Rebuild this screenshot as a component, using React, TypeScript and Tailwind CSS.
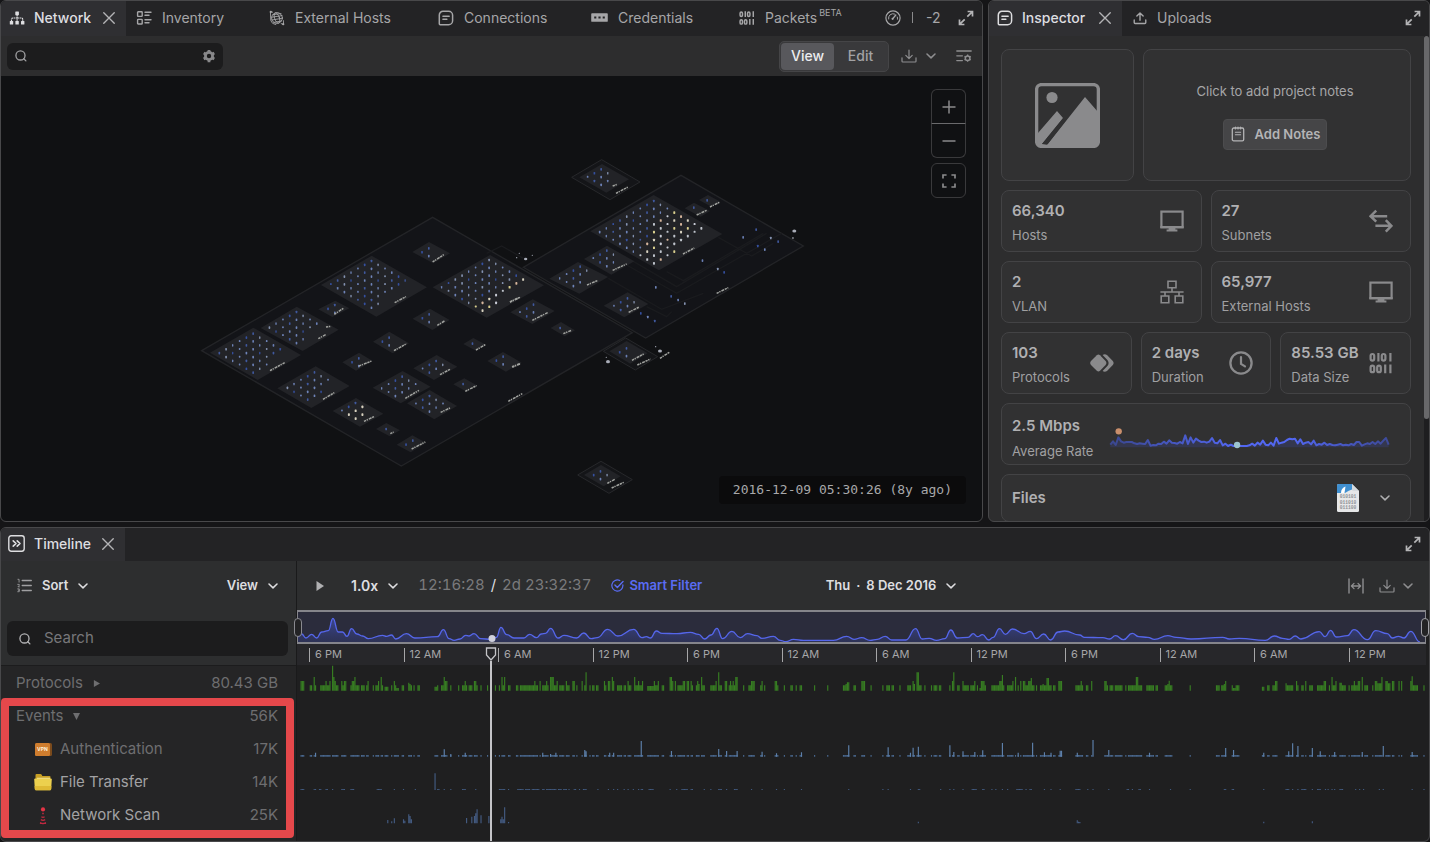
import React from "react";

type Pt = [number, number];
type IconProps = { className?: string };

/* ---------- icons ---------- */

const line = {
  fill: "none",
  stroke: "currentColor",
  strokeWidth: 1.4,
  strokeLinecap: "round" as const,
  strokeLinejoin: "round" as const,
};

function Icon({ className = "size-4", box = 16, children }: { className?: string; box?: number; children: React.ReactNode }) {
  return (
    <svg viewBox={`0 0 ${box} ${box}`} className={`shrink-0 ${className}`} aria-hidden="true">
      {children}
    </svg>
  );
}

const NetworkIcon = ({ className }: IconProps) => (
  <Icon className={className}>
    <g fill="currentColor">
      <rect x="6.3" y="1.6" width="3.6" height="3.6" rx=".5" />
      <rect x=".8" y="11" width="3.4" height="3.4" rx=".5" />
      <rect x="6.4" y="11" width="3.4" height="3.4" rx=".5" />
      <rect x="12" y="11" width="3.4" height="3.4" rx=".5" />
    </g>
    <path d="M8.1 5v6M2.5 11V9.4q0-1.4 1.4-1.4h8.4q1.4 0 1.4 1.4V11" {...line} strokeWidth="1.2" strokeDasharray="1.6 .5" strokeLinecap="butt" />
  </Icon>
);
const InventoryIcon = () => (
  <Icon>
    <rect x="1.6" y="1.8" width="4.6" height="4.6" rx=".6" {...line} />
    <rect x="1.6" y="9.4" width="4.6" height="4.6" rx=".6" {...line} />
    <path d="M9 2.2h6M9 5.2h4M9 9.8h6M9 12.8h4" {...line} />
  </Icon>
);
const GlobeIcon = () => (
  <Icon>
    <g {...line} strokeWidth=".9">
      <circle cx="8" cy="8" r="5.4" />
      <ellipse cx="8" cy="8" rx="2.4" ry="5.4" transform="rotate(-20 8 8)" />
      <path d="M2.8 7.2 13 5.6M3 10l10.4-1.8M4 4.6l8-1M4.8 12.4l7.6-1.4" />
      <path d="M1.4 1.6l2.2.6M1.4 1.6l.4 9q1 3.6 5 4M14.6 14.6l-2.4-1M14.6 14.6l-.2-4" />
    </g>
    <circle cx="1.8" cy="1.9" r="1.1" fill="currentColor" />
    <circle cx="14.2" cy="14.2" r="1.1" fill="currentColor" />
  </Icon>
);
const NoteIcon = () => (
  <Icon>
    <path d="M5 1.3h5.6a4 4 0 0 1 4 4v5.4a4 4 0 0 1-4 4H2.2a.9.9 0 0 1-.9-.9V5A3.7 3.7 0 0 1 5 1.3Z" {...line} strokeWidth="1.5" />
    <path d="M4.9 6.3h6.3M4.9 9.3h4" {...line} />
  </Icon>
);
const PasswordIcon = () => (
  <Icon className="size-[17px]">
    <path fill="currentColor" fillRule="evenodd" d="M1 4h14q.8 0 .8.8v6.4q0 .8-.8.8H1q-.8 0-.8-.8V4.8Q.2 4 1 4Zm2 3v2h2V7Zm4 0v2h2V7Zm4 0v2h2V7Z" />
  </Icon>
);
const BitsIcon = ({ className }: IconProps) => (
  <Icon className={className} box={24}>
    <g fill="none" stroke="currentColor" strokeWidth="2.2">
      <rect x="1.6" y="3" width="3.6" height="6.6" rx="1.8" />
      <rect x="12.8" y="3" width="3.6" height="6.6" rx="1.8" />
      <path d="M9.4 2v8.6M21.4 2v8.6M16.2 13.6v8.6M21.4 13.6v8.6" />
      <rect x="1.6" y="14.6" width="3.6" height="6.6" rx="1.8" />
      <rect x="8.2" y="14.6" width="3.6" height="6.6" rx="1.8" />
    </g>
  </Icon>
);
const GaugeIcon = () => (
  <Icon>
    <circle cx="8" cy="8" r="7.1" {...line} strokeWidth="1.2" />
    <path d="M3.6 9a4.5 4.5 0 0 1 6-5M12.3 7q.4 1 .2 2.2" {...line} strokeWidth="1" />
    <path d="M7.8 8.6 10.8 5" {...line} strokeWidth="1.4" />
    <circle cx="7.6" cy="8.8" r="1.1" fill="currentColor" />
  </Icon>
);
const ExpandIcon = () => (
  <Icon>
    <path d="M9.6 1.5h4.9v4.9M14.2 1.8 9.3 6.7M6.4 14.5H1.5V9.6M1.8 14.2l4.9-4.9" {...line} strokeLinecap="butt" strokeLinejoin="miter" strokeWidth="1.7" />
  </Icon>
);
const CloseIcon = () => (
  <Icon className="size-[14px]">
    <path d="M2 2l12 12M14 2 2 14" {...line} strokeWidth="1.6" />
  </Icon>
);
const SearchIcon = () => (
  <Icon className="size-[14px]">
    <circle cx="7.4" cy="7.4" r="5.2" {...line} strokeWidth="1.5" />
    <path d="m11.2 11.2 2.4 2.4" {...line} strokeWidth="1.5" />
  </Icon>
);
const GearIcon = () => (
  <Icon className="size-[14px]">
    <circle cx="8" cy="8" r="4.1" fill="none" stroke="currentColor" strokeWidth="3.2" />
    <g stroke="currentColor" strokeWidth="3.2">
      <path d="M8 1v3M8 12v3M1.94 4.5l2.6 1.5M11.46 10l2.6 1.5M1.94 11.5l2.6-1.5M11.46 6l2.6-1.5" />
    </g>
  </Icon>
);
const DownloadIcon = () => (
  <Icon>
    <path d="M8 2v8.4M4.8 7.4 8 10.6l3.2-3.2M1 9.8v3.4q0 .8.8.8h12.4q.8 0 .8-.8V9.8" {...line} strokeWidth="1.2" />
  </Icon>
);
const UploadIcon = () => (
  <Icon className="size-[14px]">
    <path d="M8 10.6V2.4M4.4 5.8 8 2.2l3.6 3.6M1.4 10.2v3q0 1 1 1h11.2q1 0 1-1v-3" {...line} strokeWidth="1.6" />
  </Icon>
);
const ChevronIcon = () => (
  <Icon className="size-[10px]" box={10}>
    <path d="M1 3 5 6.9 9 3" {...line} strokeWidth="1.5" />
  </Icon>
);
const ListGearIcon = () => (
  <Icon>
    <path d="M.8 3h14.4M.8 7.8h5.6M.8 12.6h5.6" {...line} strokeWidth="1.3" />
    <circle cx="11.6" cy="10.2" r="2.3" {...line} strokeWidth="1.5" />
    <path d="M11.6 6.6v7.2M8.5 8.4l1 .6M13.7 11.4l1 .6M8.5 12l1-.6M13.7 9l1-.6" stroke="currentColor" strokeWidth="1.3" strokeDasharray="1.3 4.6" />
  </Icon>
);
const CornersIcon = () => (
  <Icon>
    <path d="M2 5.6V2h3.600M10.400 2H14v3.600M14 10.400V14h-3.600M5.600 14H2v-3.600" fill="none" stroke="currentColor" strokeWidth="1.7" />
  </Icon>
);
const ImageIcon = () => (
  <Icon className="size-[65px]" box={65}>
    <rect x="1.6" y="1.6" width="61.8" height="61.8" rx="5" fill="none" stroke="currentColor" strokeWidth="3.4" />
    <circle cx="17" cy="14.5" r="5.6" fill="currentColor" />
    <path d="M3 50 22 28l6 7L7 61l5 1 38-48 13 15v30q0 4-4 4H6q-4 0-4-4Z" fill="currentColor" />
    <path d="M7 61 28 35.5l2.4 2.6L12.6 61Z" className="fill-[#313132]" />
  </Icon>
);
const NotepadIcon = () => (
  <Icon>
    <rect x="2.3" y="2" width="11.4" height="12.8" rx="1.4" {...line} strokeWidth="1.3" />
    <path d="M5.4 6.2h5.2M5.4 8.8h5.2M5.4 1v2M8 1v2M10.6 1v2" {...line} strokeWidth="1.1" />
  </Icon>
);
const MonitorIcon = () => (
  <Icon className="size-6" box={24}>
    <rect x="1.4" y="2.6" width="21.2" height="15.6" fill="none" stroke="currentColor" strokeWidth="2.2" />
    <path d="M.4 17h23.200v2.300H.4zM8.600 19h6.800v1.600h2v1.800H6.600v-1.800h2z" fill="currentColor" />
  </Icon>
);
const SwapIcon = () => (
  <Icon className="size-6" box={24}>
    <path d="M7.200 1.600 1.600 7.200l5.600 5.400M2 7.200h16.200M16.800 11.200l5.600 5.600-5.600 5.800M22 16.800H6.400" fill="none" stroke="currentColor" strokeWidth="2.500" />
  </Icon>
);
const VlanIcon = () => (
  <Icon className="size-6" box={24}>
    <g fill="none" stroke="currentColor" strokeWidth="1.6">
      <path d="M8 1.2h8v6.6H8zM1.2 16h7.6v6.8H1.2zM15.2 16h7.6v6.8h-7.6zM.4 12h23.2M12 8v4M5 12v4M19 12v4" />
    </g>
  </Icon>
);
const ProtocolIcon = () => (
  <Icon className="size-6" box={24}>
    <path d="M6.800 4.200q1.600-1.200 3.200 0l5.600 5.800q1.600 2 0 4L10 19.800q-1.600 1.200-3.200 0L1 14q-1.600-2 0-4Z" fill="currentColor" />
    <path d="M12.600 4q2-1.400 4.400 0l5.800 6q1.600 2 0 4L17 20q-2.400 1.400-4.400 0l5-5.200q2-2.800 0-5.600Z" fill="currentColor" />
  </Icon>
);
const ClockIcon = () => (
  <Icon className="size-6" box={24}>
    <circle cx="12" cy="12" r="10.600" fill="none" stroke="currentColor" strokeWidth="2.300" />
    <path d="M12 6v6.800l4 2.600" fill="none" stroke="currentColor" strokeWidth="2.200" strokeLinecap="round" />
  </Icon>
);
const TimelineIcon = () => (
  <Icon className="size-[17px]" box={17}>
    <rect x=".8" y=".8" width="15.4" height="15.4" rx="2.4" {...line} />
    <path d="M5.2 5.8l2.8 2.7-2.8 2.7M9.2 5.8l2.8 2.7-2.8 2.7" {...line} strokeWidth="1.6" />
  </Icon>
);
const SortIcon = () => (
  <Icon className="size-[15px]">
    <path d="M5.6 2.6h9.6M5.6 8h9.6M5.6 13.4h9.6" {...line} strokeWidth="1.5" />
    <path d="M1 1.4h1.2v3M.8 6.8h1.6v1L1 9.4h1.6M.8 11.6h1.6v3H.8M1.4 13h1" {...line} strokeWidth=".9" />
  </Icon>
);
const CheckBadgeIcon = () => (
  <Icon className="size-[13px]">
    <path d="M14.6 7.2A6.8 6.8 0 1 1 10.8 1.9" {...line} strokeWidth="1.5" />
    <path d="m4.8 7.4 3 3 7-7.2" {...line} strokeWidth="1.7" />
  </Icon>
);
const FitIcon = () => (
  <Icon>
    <path d="M1 1v14M15 1v14" {...line} strokeWidth="1.4" />
    <path d="M3.6 8h8.8M6 5.4 3.4 8 6 10.6M10 5.4 12.6 8 10 10.6" {...line} strokeWidth="1.3" />
  </Icon>
);
const FileIcon = () => (
  <svg viewBox="0 0 24 28" className="h-7 w-6 shrink-0" aria-hidden="true">
    <path d="M2.5 0H16l7 7v19.500q0 1.500-1.500 1.500h-19Q1 28 1 26.500v-25Q1 0 2.500 0Z" fill="#e6e7e8" />
    <path d="M2.500 0H16v5.500q-3 .5-7 3.500H1V1.500Q1 0 2.500 0Z" fill="#3f8fd0" />
    <path d="M5 9q0-5 4.500-6.500L8.500 9Z" fill="#fff" />
    <path d="M16 0l7 7h-5.500Q16 7 16 5.500Z" fill="#d5dade" />
    <g fill="#8d9296" fontSize="4.600" fontFamily="Liberation Mono, monospace" textAnchor="middle">
      <text x="12" y="14.400">010101</text>
      <text x="12" y="19.800">011010</text>
      <text x="12" y="25.200">011100</text>
    </g>
  </svg>
);
const VpnIcon = () => (
  <svg viewBox="0 0 17 13" className="h-[13px] w-[17px] shrink-0" aria-hidden="true">
    <rect width="17" height="13" rx="1.500" fill="#7a4a1c" />
    <rect width="15" height="13" rx="1.500" fill="#cf7d2e" />
    <text x="7.500" y="8.200" fontSize="5" fontWeight="700" fill="#fff0dc" textAnchor="middle" fontFamily="Inter, sans-serif">VPN</text>
  </svg>
);
const FolderIcon = () => (
  <svg viewBox="0 0 18 17" className="h-[17px] w-[18px] shrink-0" aria-hidden="true">
    <path d="M1.500 1q0-1 1-1h4q.8 0 1.200.8L8.300 2h7.200q1 0 1 1v4h-15Z" fill="#c79f24" />
    <path d="M3 3.700h13V7H3Z" fill="#f0e4a8" />
    <path d="M.2 5.600q0-1 1-1h15.600q1 0 1 1l-.6 9.400q-.1 1.200-1.200 1.200H2Q.9 16.200.8 15Z" fill="#ecd04e" />
    <path d="M.6 12h16.800l-.2 3q-.1 1.200-1.200 1.200H2Q.9 16.200.8 15Z" fill="#dfba35" />
  </svg>
);
const ScanIcon = () => (
  <svg viewBox="0 0 18 18" className="size-[18px] shrink-0" aria-hidden="true">
    <circle cx="9" cy="2.400" r="2.100" fill="#e33446" />
    <g fill="none" stroke="#c12a40" strokeWidth="1.300">
      <path d="M8.200 6.500h1.600M7.400 9.800q1.600 1 3.200 0M6.800 12.600q2.200 1.400 4.400 0M6 15.600q3 1.900 6 0" />
    </g>
    <path d="M6 16.400h6" stroke="#c12a40" strokeWidth="1" />
  </svg>
);

/* ---------- network map ---------- */

const DX = 20.3;
const DY = 11.7;

// left, top and right corner, first host, hosts per row, rows, hosts in the last row, colour mix
type Tile = { c: number[]; h: number[]; warm?: number; outer?: number[] };

const WEST: Tile[] = [
  { c: [60, 458, 190, 383, 333, 465], h: [190, 401, 6, 6, 3] },
  { c: [212, 384, 320, 320, 446, 389], h: [320, 336, 5, 5, 2] },
  { c: [385, 328, 436, 302, 478, 325], h: [435, 315, 2, 2, 1] },
  { c: [393, 255, 545, 167, 711, 262], h: [545, 183, 7, 7, 2] },
  { c: [667, 156, 717, 126, 780, 160], h: [717, 145, 2, 2, 1] },
  { c: [728, 262, 900, 165, 1062, 256], h: [898, 180, 8, 7, 3], warm: 2 },
  { c: [668, 356, 720, 326, 779, 360], h: [718, 343, 2, 2, 1] },
  { c: [549, 425, 598, 395, 657, 430], h: [598, 413, 2, 2, 1] },
  { c: [457, 487, 507, 458, 548, 483], h: [507, 475, 2, 2, 1] },
  { c: [262, 565, 377, 499, 479, 558], h: [374, 517, 5, 4, 3] },
  { c: [428, 633, 498, 594, 580, 641], h: [497, 609, 3, 3, 2], warm: 4 },
  { c: [548, 563, 638, 513, 722, 560], h: [637, 530, 4, 3, 4] },
  { c: [670, 505, 740, 465, 802, 500], h: [739, 483, 3, 2, 3] },
  { c: [651, 610, 719, 570, 801, 618], h: [719, 588, 3, 3, 3] },
  { c: [790, 553, 823, 535, 860, 556], h: [820, 552, 1, 1, 1] },
  { c: [820, 432, 850, 414, 888, 434], h: [848, 431, 1, 1, 1] },
  { c: [892, 483, 939, 456, 995, 488], h: [940, 470, 2, 2, 1] },
  { c: [558, 687, 589, 669, 630, 691], h: [589, 687, 1, 1, 1] },
  { c: [620, 734, 667, 706, 709, 729], h: [669, 722, 2, 1, 2] },
];
const EAST: Tile[] = [
  { c: [331, 244, 521, 135, 727, 252], h: [522, 153, 9, 9, 4], warm: 1 },
  { c: [312, 327, 381, 287, 463, 334], h: [381, 302, 3, 3, 2] },
  { c: [208, 386, 294, 336, 384, 381], h: [301, 350, 4, 3, 2] },
  { c: [371, 467, 443, 427, 505, 462], h: [443, 445, 3, 2, 3] },
  { c: [657, 150, 684, 135, 721, 155], h: [682, 151, 1, 1, 1] },
  { c: [614, 175, 642, 158, 690, 183], h: [642, 173, 1, 1, 1] },
  { c: [91, 487, 158, 448, 224, 483], h: [161, 464, 3, 2, 2] },
  { c: [212, 534, 243, 516, 285, 541], h: [241, 534, 1, 1, 1] },
  { c: [388, 604, 440, 573, 503, 610], h: [440, 595, 2, 2, 1], outer: [370, 604, 437, 564, 533, 620] },
  { c: [312, 975, 363, 945, 422, 979], h: [362, 964, 2, 2, 2], outer: [293, 975, 363, 934, 457, 989] },
  { c: [298, 82, 366, 42, 447, 88], h: [364, 58, 3, 3, 2], outer: [275, 82, 365, 29, 480, 96] },
];
const WEST_LABELS = [
  [240, 512, 284, 488], [385, 416, 407, 404], [433, 343, 460, 325], [614, 308, 648, 290], [728, 186, 763, 163],
  [960, 306, 986, 293], [742, 376, 765, 362], [612, 452, 650, 431], [507, 498, 545, 483], [399, 598, 433, 578],
  [522, 664, 552, 650], [646, 595, 687, 571], [750, 524, 780, 508], [752, 637, 780, 624], [826, 574, 860, 557],
  [858, 450, 886, 434], [966, 500, 990, 491], [601, 701, 611, 696], [665, 747, 706, 726], [955, 604, 997, 581],
  [408, 381, 424, 379],
];
const EAST_LABELS = [
  [609, 312, 643, 294], [398, 361, 440, 342], [321, 405, 352, 392], [446, 487, 478, 471], [690, 171, 718, 157],
  [650, 195, 680, 181], [157, 511, 203, 488], [250, 551, 275, 541], [90, 456, 120, 442], [710, 430, 745, 413],
  [456, 631, 491, 612], [472, 645, 512, 627], [540, 625, 568, 607], [97, 652, 122, 641], [382, 1000, 405, 988],
  [395, 1014, 434, 996], [398, 108, 412, 103], [408, 130, 446, 110],
];
const LOOSE_HOSTS: Pt[] = [
  [829, 239], [790, 262], [873, 264], [834, 288], [855, 299], [895, 275], [668, 332], [714, 357],
  [733, 367], [528, 412], [574, 439], [595, 450], [615, 461], [483, 490], [504, 501], [525, 513],
];
const GATEWAYS = [
  [137, 327, 5], [118, 310, 2], [110, 323, 2], [157, 316, 2], [384, 635, 6], [379, 622, 2],
  [540, 603, 6], [527, 590, 2], [943, 243, 6], [939, 264, 3],
];

const rhombus = ([lx, ly, tx, ty, rx, ry]: number[]) => `M${lx} ${ly}L${tx} ${ty}L${rx} ${ry}L${lx + rx - tx} ${ly + ry - ty}Z`;
const COOL = ["#40599f", "#6a7fb4", "#8492b0", "#3550a0", "#6f84b8"];
const WARM = ["#d8d2c0", "#d9cf8e", "#c9ccd6", "#d6b59c", "#bfc4cc"];

function hostColor(i: number, j: number, warm?: number) {
  const k = (i * 7 + j * 3 + i * j) % 5;
  if (warm === 1 && (i >= 3 && (i > j / 1.6 + 1 || i > 5))) return WARM[k];
  if (warm === 2 && i >= 5) return WARM[k];
  if (warm === 2) return COOL[k === 0 ? 2 : k];
  if (warm === 4 && i >= 1) return WARM[0];
  return COOL[k];
}

function TileShape({ tile }: { tile: Tile }) {
  const [x, y, perRow, rows, last] = tile.h;
  const hosts: React.ReactNode[] = [];
  for (let i = 0; i < rows; i++) {
    for (let j = i === rows - 1 ? perRow - last : 0; j < perRow; j++) {
      const k = (i * 5 + j * 3) % 4;
      const color = hostColor(i, j, tile.warm);
      hosts.push(
        <rect
          key={`${i}-${j}`}
          x={x + (i - j) * DX - 3}
          y={y + (i + j) * DY - 4}
          width={WARM.includes(color) ? 6 : k === 1 ? 4 : 5}
          height={k === 2 ? 6 : 8}
          rx="2"
          fill={color}
        />
      );
    }
  }
  return (
    <g>
      {tile.outer && <path d={rhombus(tile.outer)} fill="#141518" stroke="#27282b" strokeWidth="3" />}
      <path d={rhombus(tile.c)} fill="#222327" />
      {hosts}
    </g>
  );
}

function Labels({ items }: { items: number[][] }) {
  return (
    <g stroke="#a2a4a0" strokeWidth="4.5" strokeDasharray="7 2 4 3 9 2">
      {items.map(([a, b, c, d], n) => (
        <path key={n} d={`M${a} ${b}L${c} ${d}`} />
      ))}
    </g>
  );
}

function NetworkMap() {
  return (
    <svg viewBox="1 76 981 445" className="size-full" role="img" aria-label="Network map">
      <g transform="translate(190 200) scale(.3333)">
        <path d={rhombus([35, 452, 728, 52, 1327, 398])} fill="#131418" stroke="#232427" strokeWidth="4" />
      </g>
      <g transform="translate(480 150) scale(.3333)">
        <path d={rhombus([130, 352, 603, 76, 970, 288])} fill="#131418" stroke="#232427" strokeWidth="4" />
        <g fill="none" stroke="#1a1b1e" strokeWidth="4">
          <path d="M715 262 815 318 880 280M460 334 590 410 860 250M440 345 590 430 905 250M385 385 545 478 670 430M500 470 560 500 575 485M560 365 610 392 850 250M20 310 65 288 130 325" />
        </g>
      </g>
      <g transform="translate(190 200) scale(.3333)">
        {WEST.map((t, n) => (
          <TileShape key={n} tile={t} />
        ))}
        <Labels items={WEST_LABELS} />
      </g>
      <g transform="translate(480 150) scale(.3333)">
        {EAST.map((t, n) => (
          <TileShape key={n} tile={t} />
        ))}
        {LOOSE_HOSTS.map(([x, y], n) => (
          <rect key={n} x={x - 3} y={y - 4} width="5" height="8" rx="2" fill={COOL[n % 5]} />
        ))}
        {GATEWAYS.map(([x, y, r], n) => (
          <ellipse key={n} cx={x} cy={y} rx={r} ry={r * 0.8} fill="#a9adb8" />
        ))}
        <Labels items={EAST_LABELS} />
      </g>
    </svg>
  );
}

/* ---------- timeline data ---------- */

// "start-end:height" runs, each section with its own offset
const TRAFFIC: [number, string][] = [
  [0, "30-44:29 60-68:16 70-74:41 76-80:16 90-106:16 106-110:29 112-118:16 118-122:29 126-130:75 130-134:41 134-138:29 138-146:16 153-158:29 158-162:16 162-168:29 181-186:16 186-193:29 193-198:41 198-210:16 214-224:16 228-232:16 232-236:29 247-252:16 258-264:16 265-269:29 271-275:41 275-279:16 283-296:12 302-306:16 310-315:29 316-321:16 321-326:8 335-341:16 354-358:24 358-363:20 363-367:16 370-375:16 382-390:16 433-442:12 442-447:16 455-460:16 461-465:41 466-471:29 479-485:16 504-509:16 518-524:16 524-528:29 528-533:16 536-548:16 550-558:29 558-562:16 570-575:16 590-595:16 614-619:16 626-631:16 633-637:41 637-640:16 641-645:41 653-662:16 676-686:16 690-705:16 707-732:16 732-736:29 736-745:16 748-753:29 756-768:16 768-772:29 772-776:16 780-784:41 786-790:41 792-800:16 800-804:29 808-822:16 826-831:29 831-839:16 849-854:29 858-862:16 873-879:29 881-885:16 886-890:55 897-901:16 908-913:16 918-925:16 940-945:29 947-951:16 952-962:29 964-968:41 968-972:29 980-996:16 1000-1010:16 1012-1018:29 1018-1023:16 1031-1035:41 1035-1043:16 1043-1047:29 1050-1055:16 1055-1059:29 1072-1090:14 1090-1094:29 1097-1103:16 1103-1107:29 1115-1122:16 1140-1145:41 1147-1151:29 1156-1160:29 1162-1178:16 1180-1185:29 1188-1196:29"],
  [1200, "0-4:29 4-10:16 18-22:16 22-26:29 26-30:20 32-36:41 38-45:16 60-75:16 75-79:29 83-87:55 88-95:16 105-112:29 114-118:16 118-122:29 122-126:16 129-133:29 133-137:16 137-143:41 158-163:16 176-181:16 181-193:29 210-213:16 213-217:29 221-227:16 255-261:29 260-264:16 280-285:16 302-308:16 315-320:16 330-336:16 371-375:16 411-415:16 460-465:16 468-472:20 472-477:25 492-497:16 512-524:29 540-545:16 576-581:16 588-599:16 606-611:16 627-632:16 650-655:16 657-664:16 666-671:29 672-677:20 681-686:55 687-694:16 702-706:16 722-728:16 730-734:16 736-741:16 748-754:16 776-781:16 787-791:29 791-795:55 803-809:16 816-822:29 822-829:16 831-836:16 839-851:16 851-854:29 854-858:16 860-866:16 870-874:8 874-884:29 884-888:16 904-928:16 928-934:29 937-941:47 941-945:16 950-966:16 966-972:29 974-980:41 982-988:16 990-996:29 1000-1006:29 1008-1016:16 1016-1022:29 1024-1028:38 1028-1034:16 1036-1041:16 1050-1056:16 1057-1063:20 1063-1070:16 1071-1076:38 1079-1085:16 1090-1097:16 1103-1106:16 1106-1115:29"],
  [2310, "48-60:16 60-64:29 64-69:16 79-87:16 95-99:29 134-139:29 139-146:16 148-152:16 154-159:16 166-188:16 197-201:16 204-228:16 228-234:41 234-237:16 240-246:16 260-283:16 286-296:16 315-323:16 323-327:20 327-331:30 331-336:16 387-390:16 468-478:16 485-492:16 492-495:20 496-500:29 516-520:16 520-525:8 528-537:16 605-614:12 620-628:16 638-645:16 645-653:29 677-681:22 681-687:16 690-700:16 707-713:29 713-716:16 724-731:16 737-741:29 748-758:16 771-790:16 791-799:29 805-810:16 815-820:41 820-826:16 826-831:29 838-846:24 846-856:16 866-870:16 872-880:16 880-884:29 884-895:16 895-900:29 905-910:41 912-924:16 937-942:16 945-951:29 951-964:22 964-968:41 975-985:29 985-992:22 995-1005:29 1015-1020:29 1023-1028:29 1050-1055:29 1055-1060:43 1060-1076:16 1090-1092:16"],
];
const AUTH_PEAKS: [number, string][] = [
  [0, "73:12 462:22 482:8 525:12 755:12 780:8 797:12 882:20 886:16 957:12 970:12 1052:47 1143:17"],
  [1200, "85:23 108:17 139:17 215:15 258:10 333:13 475:34 593:28 660:12 667:27 683:30 778:34 790:14 818:16 852:14 877:19 936:41 982:12 1025:42 1063:13 1080:12 1108:18"],
  [2310, "1:18 50:12 97:50 144:20 267:12 497:26 519:20 609:12 685:16 696:40 711:32 754:26 777:16 822:14 907:14 967:32 1055:14"],
];
const TRANSFERS: [number, string][] = [
  [0, "33-45:3 70-80:3 86-95:3 108-115:3 126-130:3 152-165:3 183-193:3 262-277:3 310-315:3 340:3 373:3 435:50 440-448:3 462:3 482:3 518-528:3 557:3 628-645:3 655:3 681-700:3 705-720:3 724-750:3 757-765:3 770-800:3 805-815:3 820-830:3 836:3 850-860:3 865:3 880-890:3 920:3 952:3 968:3 981:3 1000:3 1012-1018:3 1030:3 1045:3 1052-1060:3 1075-1090:3 1140:3 1160:3 1175-1195:3"],
  [1200, "0-8:3 40:3 62:3 83-95:3 108:3 130-143:3 183:3 215:3 258:3 282:3 333:3 475:3 577:3 592-598:3 658-665:3 682-692:3 750:3 778:3 790:3 818:3 843-860:3 875-885:3 905:3 915:3 935:3 950:3 977-998:3 1005-1012:3 1018-1028:3 1060:3 1080:3 1108:3"],
  [2310, "48-60:3 82:3 97:3 144:3 199-208:3 215:3 235-245:3 267:3 330:3 388:3 492-500:3 516-524:3 608:3 678-690:3 695-702:3 711-716:3 725-740:3 754:3 772-782:3 793:3 803:3 815:3 824:3 838-848:3 884:3 897:3 910:3 955:3 967:3 1055:3 1090:3"],
];
const SCANS: [number, string][] = [
  [0, "293:10 305:6 312:15 337:12 341:8 355:27 360:22 363:12 529:16 545:20 550:22 554:30 561:42 573:24 593:22 629:12 635:20 639:12 644:48 655:4"],
  [1200, "683:5"],
  [2310, "50:9 54:5 57:4 608:5 754:6"],
];

const SLOT = 3.94;

function bars(source: [number, string][], baseline: number, fixed?: number) {
  const seen = new Map<number, number>();
  for (const [offset, text] of source) {
    for (const run of text.split(" ")) {
      const [range, height] = run.split(":");
      const [a, b] = range.split("-").map(Number);
      const first = Math.round((a + offset) / SLOT);
      const lastSlot = b ? Math.max(first, Math.round((b + offset) / SLOT) - 1) : first;
      for (let s = first; s <= lastSlot; s++) seen.set(s, Math.max(seen.get(s) ?? 0, fixed ?? Number(height)));
    }
  }
  let d = "";
  seen.forEach((h, s) => {
    d += `M${(s * SLOT).toFixed(1)} ${baseline}v${-h}h3.5v${h}z`;
  });
  return d;
}

const OVERVIEW: Pt[] = [
  ...([[21, 230], [32, 222], [45, 234], [62, 223], [77, 234], [92, 216], [112, 212], [126, 175], [142, 216], [155, 216], [168, 229], [182, 206], [198, 222], [215, 228], [232, 236], [275, 226], [287, 229], [302, 225], [315, 237], [347, 221], [372, 234], [440, 230], [458, 209], [475, 236], [490, 241], [508, 237], [525, 226], [535, 228], [550, 221], [570, 236], [602, 238], [617, 232], [631, 202], [648, 224], [670, 234], [700, 234], [717, 223], [738, 233], [752, 222], [765, 220], [780, 205], [803, 234], [820, 226], [858, 234], [880, 219], [902, 236], [920, 233], [952, 208], [982, 228], [1030, 208], [1055, 233], [1068, 230], [1080, 234], [1098, 213], [1115, 220], [1160, 221]] as Pt[]),
  ...([[0, 217], [25, 223], [43, 237], [62, 225], [80, 205], [97, 236], [125, 214], [150, 233], [172, 221], [200, 227], [215, 235], [250, 229], [270, 241], [287, 245], [310, 238], [340, 241], [430, 241], [470, 229], [492, 238], [515, 233], [540, 241], [562, 238], [586, 229], [605, 240], [648, 240], [677, 206], [697, 237], [718, 235], [740, 241], [765, 236], [783, 210], [802, 234], [835, 232], [850, 221], [863, 230], [878, 224], [897, 240], [910, 232], [929, 206], [947, 223], [968, 207], [1003, 221], [1022, 214], [1040, 236], [1062, 222], [1083, 240], [1105, 216]] as Pt[]).map(([x, y]): Pt => [x + 1200, y]),
  ...([[15, 333], [60, 345], [75, 352], [130, 353], [150, 357], [168, 347], [192, 359], [218, 340], [238, 350], [265, 352], [285, 358], [325, 347], [350, 352], [395, 357], [490, 352], [510, 357], [540, 355], [618, 361], [645, 348], [670, 355], [690, 358], [708, 348], [725, 357], [780, 335], [798, 350], [814, 331], [832, 351], [865, 347], [884, 329], [925, 359], [950, 332], [985, 341], [1000, 354], [1018, 349], [1035, 354], [1055, 334], [1083, 366]] as Pt[]).map(([x, y]): Pt => [x + 2310, y - 120]),
];

function smooth(points: Pt[]) {
  let d = `M${points[0][0]} ${points[0][1]}`;
  for (let n = 1; n < points.length; n++) {
    const [x0, y0] = points[n - 1];
    const [x1, y1] = points[n];
    const m = (x0 + x1) / 2;
    d += `C${m} ${y0} ${m} ${y1} ${x1} ${y1}`;
  }
  return d;
}

const WAVE = smooth(OVERVIEW);

const RATE = "6 16 5 28 16 12 14 14 14 10 8 10 9 8 20 3 5 4 9 8 15 9 19 12 11 9 14 10 34 8 28 12 24 18 14 15 12 15 26 12 10 20 4 9 2 6 2 2 2 2 2 2 4 9 3 12 6 18 6 4 12 3 26 9 12 14 20 24 22 24 10 22 8 12 14 7 18 4 8 6 12 5 8 5 4 6 8 4 6 4 8 5 14 14 3 7 10 8 14 8 16 9 18 26 6"
  .split(" ")
  .map(Number);
const RATE_LINE = RATE.map((v, n) => `${n ? "L" : "M"}${379 + n * 8} ${574 - v}`).join("");

const TICKS = ["6 PM", "12 AM", "6 AM", "12 PM", "6 PM", "12 AM", "6 AM", "12 PM", "6 PM", "12 AM", "6 AM", "12 PM"];
const PLAYHEAD = 194 / 1129;

/* ---------- shared parts ---------- */

function ActiveTab({ icon, label, className }: { icon: React.ReactNode; label: string; className: string }) {
  return (
    <div className={`flex items-center bg-[#2f2f32] pb-0.5 text-sm font-medium text-[#dedee0] ${className}`}>
      {icon}
      <span className="pl-[9px]">{label}</span>
      <button aria-label={`Close ${label}`} className="ml-auto text-[#b4b4b6]">
        <CloseIcon />
      </button>
    </div>
  );
}

function Tab({ icon, label, className = "", beta }: { icon: React.ReactNode; label: string; className?: string; beta?: boolean }) {
  return (
    <button className={`flex items-center gap-2.5 pb-0.5 pl-[10px] text-sm text-[#a6a6a8] ${className}`}>
      {icon}
      <span>{label}</span>
      {beta && <span className="-ml-2 pb-2 text-[9px]">BETA</span>}
    </button>
  );
}

function Stat({ value, label, icon }: { value: string; label: string; icon: React.ReactNode }) {
  return (
    <div className="flex h-[62px] items-center justify-between rounded-lg border border-[#434345] bg-[#313132] pr-[17px] pl-[10px]">
      <div className="pt-[3px] whitespace-nowrap">
        <div className="text-[15px] leading-[25px] font-semibold text-[#b0b0b2]">{value}</div>
        <div className="text-[13px] leading-[25px] text-[#a0a0a2]">{label}</div>
      </div>
      <span className="text-[#8a8a8c]">{icon}</span>
    </div>
  );
}

function EventRow({ icon, label, count, dim }: { icon: React.ReactNode; label: string; count: string; dim?: boolean }) {
  return (
    <li className="flex h-[33px] items-center pr-[18px] pl-[33px]">
      <span className="flex w-[18px] justify-center">{icon}</span>
      <span className={`pl-2 ${dim ? "text-[#6e6e70]" : "text-[#a2a2a4]"}`}>{label}</span>
      <span className="ml-auto text-[#6e6e70]">{count}</span>
    </li>
  );
}

/* ---------- panels ---------- */

function NetworkPanel() {
  return (
    <section className="flex min-w-0 flex-col overflow-hidden rounded-md border border-[#48484a] bg-[#101113]">
      <div className="flex h-[35px] shrink-0 bg-[#232325]">
        <ActiveTab icon={<NetworkIcon />} label="Network" className="w-[125px] pr-[10px] pl-2" />
        <Tab icon={<InventoryIcon />} label="Inventory" className="w-[133px]" />
        <Tab icon={<GlobeIcon />} label="External Hosts" className="w-[169px]" />
        <Tab icon={<NoteIcon />} label="Connections" className="w-[153px]" />
        <Tab icon={<PasswordIcon />} label="Credentials" className="w-[148px]" />
        <Tab icon={<BitsIcon />} label="Packets" beta />
        <div className="ml-auto flex items-center pr-2 pb-0.5 text-sm text-[#a6a6a8]">
          <GaugeIcon />
          <span className="ml-[11px] h-[11px] w-px bg-[#8a8a8c]" />
          <span className="ml-[13px] w-[32px]">-2</span>
          <button aria-label="Expand network panel" className="text-[#b4b4b6]">
            <ExpandIcon />
          </button>
        </div>
      </div>
      <div className="flex h-10 shrink-0 items-center bg-[#2d2d2e] px-1.5">
        <label className="flex h-[27px] w-[216px] items-center rounded-md bg-[#1c1c1d] px-[7px] text-[#a0a0a2]">
          <SearchIcon />
          <input aria-label="Search network" className="min-w-0 flex-1 bg-transparent px-2 text-sm outline-none" />
          <span className="text-[#88888a]">
            <GearIcon />
          </span>
        </label>
        <div className="ml-auto flex h-[31px] items-center rounded-[5px] border border-[#454547] bg-[#39393b] p-px text-sm font-medium">
          <button className="h-[27px] w-[53px] rounded bg-[#58585c] text-[#ececee]">View</button>
          <button className="h-[27px] w-[53px] text-[#a2a2a4]">Edit</button>
        </div>
        <button aria-label="Download" className="ml-3 flex items-center gap-[9px] text-[#8e8e90]">
          <DownloadIcon />
          <ChevronIcon />
        </button>
        <button aria-label="View settings" className="mr-1 ml-5 text-[#8e8e90]">
          <ListGearIcon />
        </button>
      </div>
      <div className="relative min-h-0 flex-1">
        <NetworkMap />
        <div className="absolute top-[13px] right-4 flex w-[35px] flex-col text-[#8a8a8c]">
          <button aria-label="Zoom in" className="flex h-[35px] items-center justify-center rounded-t-md border border-[#3a3a3c] border-b-[#6a6a6c]">
            <Icon>
              <path d="M8 1.500v13M1.500 8h13" stroke="currentColor" strokeWidth="1.500" />
            </Icon>
          </button>
          <button aria-label="Zoom out" className="flex h-[34px] items-center justify-center rounded-b-md border border-t-0 border-[#3a3a3c]">
            <Icon>
              <path d="M1.500 8h13" stroke="currentColor" strokeWidth="1.700" />
            </Icon>
          </button>
          <button aria-label="Fit to screen" className="mt-[5px] flex h-[35px] items-center justify-center rounded-md border border-[#3a3a3c]">
            <CornersIcon />
          </button>
        </div>
        <time className="absolute right-4 bottom-[17px] rounded bg-[#0b0b0c] px-[14px] py-1 font-['DejaVu_Sans_Mono',monospace] text-[13px] leading-5 text-[#a8a8aa]">
          2016-12-09 05:30:26 (8y ago)
        </time>
      </div>
    </section>
  );
}

function InspectorPanel() {
  return (
    <section className="flex min-w-0 flex-col overflow-hidden rounded-md border border-[#48484a] bg-[#2d2d2e]">
      <div className="flex h-[35px] shrink-0 bg-[#232325]">
        <ActiveTab icon={<NoteIcon />} label="Inspector" className="w-[133px] pr-[10px] pl-2" />
        <Tab icon={<UploadIcon />} label="Uploads" className="ml-px" />
        <button aria-label="Expand inspector panel" className="mr-2 ml-auto pb-0.5 text-[#b4b4b6]">
          <ExpandIcon />
        </button>
      </div>
      <div className="flex min-h-0 flex-1">
        <div className="flex min-w-0 flex-1 flex-col gap-[9px] overflow-hidden pt-[13px] pr-[13px] pl-3">
          <div className="flex h-[132px] shrink-0 gap-[9px]">
            <button aria-label="Project image" className="flex w-[133px] items-center justify-center rounded-lg border border-[#434345] bg-[#313132] text-[#8a8a8c]">
              <ImageIcon />
            </button>
            <div className="flex flex-1 flex-col items-center justify-center gap-[17px] rounded-lg border border-[#434345] bg-[#313132] pr-1 pt-0.5 text-[13px] text-[#a6a6a8]">
              <p>Click to add project notes</p>
              <button className="flex h-[31px] items-center gap-[9px] rounded border border-[#4c4c4e] bg-[#454547] px-1.5 text-[13px] font-semibold text-[#b4b4b6]">
                <NotepadIcon />
                Add Notes
              </button>
            </div>
          </div>
          <div className="grid shrink-0 grid-cols-2 gap-[9px]">
            <Stat value="66,340" label="Hosts" icon={<MonitorIcon />} />
            <Stat value="27" label="Subnets" icon={<SwapIcon />} />
            <Stat value="2" label="VLAN" icon={<VlanIcon />} />
            <Stat value="65,977" label="External Hosts" icon={<MonitorIcon />} />
          </div>
          <div className="grid shrink-0 grid-cols-3 gap-[9px]">
            <Stat value="103" label="Protocols" icon={<ProtocolIcon />} />
            <Stat value="2 days" label="Duration" icon={<ClockIcon />} />
            <Stat value="85.53 GB" label="Data Size" icon={<BitsIcon className="size-6" />} />
          </div>
          <div className="flex h-[62px] shrink-0 items-end rounded-lg border border-[#434345] bg-[#313132] pr-[14px] pb-px pl-[10px]">
            <div className="w-[97px] shrink-0 whitespace-nowrap">
              <div className="text-[15px] leading-[26px] font-semibold text-[#b0b0b2]">2.5 Mbps</div>
              <div className="text-[13px] leading-6 text-[#a0a0a2]">Average Rate</div>
            </div>
            <svg viewBox="375 515 858 66" preserveAspectRatio="none" className="mb-[14px] h-[22px] min-w-0 flex-1" role="img" aria-label="Average rate over time">
              <defs>
                <linearGradient id="rate" x1="0" x2="1">
                  <stop offset="0" stopColor="#3a4790" />
                  <stop offset=".45" stopColor="#5267f2" />
                  <stop offset=".65" stopColor="#5267f2" />
                  <stop offset="1" stopColor="#3d4a9a" />
                </linearGradient>
              </defs>
              <path d={`${RATE_LINE}V576H379Z`} fill="#3b4694" opacity=".3" />
              <path d={RATE_LINE} fill="none" stroke="url(#rate)" strokeWidth="6" strokeLinejoin="round" />
              <circle cx="404" cy="528" r="9.500" fill="#c98f6c" />
              <circle cx="758" cy="569" r="9.500" fill="#9cc4cf" />
            </svg>
          </div>
          <button className="flex h-12 shrink-0 items-center rounded-lg border border-[#434345] bg-[#313132] pr-5 pl-[10px] text-[15px] font-semibold text-[#b0b0b2]">
            Files
            <span className="mr-5 ml-auto">
              <FileIcon />
            </span>
            <ChevronIcon />
          </button>
        </div>
        <div className="w-[5px] bg-[#1e1e20]">
          <div className="h-[79%] rounded-full bg-[#68686a]" />
        </div>
      </div>
    </section>
  );
}

function TimelineSidebar() {
  return (
    <div className="flex w-[296px] shrink-0 flex-col border-r border-[#1a1a1b] bg-[#252526]">
      <div className="bg-[#2d2e2f]">
        <div className="flex h-[49px] items-center justify-between pr-[18px] pl-4 text-[13px] font-semibold text-[#dedee0]">
          <button className="flex items-center gap-2.5">
            <span className="text-[#a0a0a2]">
              <SortIcon />
            </span>
            Sort
            <ChevronIcon />
          </button>
          <button className="flex items-center gap-2.5">
            View
            <ChevronIcon />
          </button>
        </div>
        <label className="mt-[11px] mr-2 mb-[9px] ml-1.5 flex h-[35px] items-center gap-3 rounded-md bg-[#1c1c1d] px-[11px] text-[#b4b4b6]">
          <SearchIcon />
          <input placeholder="Search" aria-label="Search timeline" className="min-w-0 flex-1 bg-transparent text-[15px] outline-none placeholder:text-[#77777a]" />
        </label>
      </div>
      <div className="border-t border-[#1c1c1d] text-[15px] text-[#6e6e70]">
        <button className="flex h-[34px] w-full items-center gap-2.5 pr-[18px] pl-[15px]">
          Protocols
          <Icon className="size-[7px]" box={8}>
            <path d="M1 0l7 4-7 4z" fill="currentColor" />
          </Icon>
          <span className="ml-auto">80.43 GB</span>
        </button>
        <div className="relative">
          <button className="flex h-[33px] w-full items-center gap-2.5 pr-[18px] pl-[15px]">
            Events
            <Icon className="size-[7px]" box={8}>
              <path d="M0 0h8L4 8z" fill="currentColor" />
            </Icon>
            <span className="ml-auto">56K</span>
          </button>
          <ul>
            <EventRow icon={<VpnIcon />} label="Authentication" count="17K" dim />
            <EventRow icon={<FolderIcon />} label="File Transfer" count="14K" />
            <EventRow icon={<ScanIcon />} label="Network Scan" count="25K" />
          </ul>
          <div className="pointer-events-none absolute -top-0.5 right-0.5 -bottom-1.5 left-0 rounded border-8 border-[#e5484b]" />
        </div>
      </div>
    </div>
  );
}

function TimelinePanel() {
  return (
    <section className="flex min-w-0 flex-col overflow-hidden rounded-md border border-[#48484a] bg-[#1f1f20]">
      <div className="flex h-[33px] shrink-0 bg-[#232325]">
        <ActiveTab icon={<TimelineIcon />} label="Timeline" className="w-[124px] pr-[10px] pl-[7px]" />
        <button aria-label="Expand timeline panel" className="mr-2 ml-auto pb-0.5 text-[#b4b4b6]">
          <ExpandIcon />
        </button>
      </div>
      <div className="flex min-h-0 flex-1">
        <TimelineSidebar />
        <div className="flex min-w-0 flex-1 flex-col">
          <div className="flex h-[49px] shrink-0 items-center bg-[#2d2e2f] pr-4 pl-[18px] text-[#b0b0b2]">
            <div className="flex flex-1 items-center whitespace-nowrap">
              <button aria-label="Play">
                <Icon className="size-[10px]" box={10}>
                  <path d="M1.500 0 9 5l-7.500 5z" fill="currentColor" />
                </Icon>
              </button>
              <button className="ml-[26px] flex items-center gap-2.5 text-sm font-semibold text-[#dedee0]">
                1.0x
                <ChevronIcon />
              </button>
              <span className="ml-5 flex gap-1.5 text-[15px] text-[#7a7a7c] tabular-nums">
                <span>12:16:28</span>
                <span className="text-[#dedee0]">/</span>
                <span>2d 23:32:37</span>
              </span>
              <button className="ml-5 flex items-center gap-[5px] text-[13px] font-semibold text-[#5a6cf3]">
                <CheckBadgeIcon />
                Smart Filter
              </button>
            </div>
            <button className="ml-[54px] flex items-center gap-2.5 text-[13px] font-semibold whitespace-nowrap text-[#dedee0]">
              <span className="flex gap-1.5">
                <span>Thu</span>
                <span>·</span>
                <span>8 Dec 2016</span>
              </span>
              <ChevronIcon />
            </button>
            <div className="flex flex-1 items-center justify-end text-[#8e8e90]">
              <button aria-label="Fit range">
                <FitIcon />
              </button>
              <button aria-label="Download timeline" className="ml-[15px] flex items-center gap-2">
                <DownloadIcon />
                <ChevronIcon />
              </button>
            </div>
          </div>
          <div className="relative mr-[3px] h-[34px] shrink-0 border-x border-y-2 border-[#85858b] bg-[#2b2c3c]">
            <svg viewBox="21 156 3387 90" preserveAspectRatio="none" className="size-full" role="img" aria-label="Traffic overview">
              <defs>
                <linearGradient id="wave" x1="0" x2="0" y1="0" y2="1">
                  <stop offset="0" stopColor="#4152b8" stopOpacity=".7" />
                  <stop offset="1" stopColor="#333c7a" stopOpacity=".4" />
                </linearGradient>
              </defs>
              <path d={`${WAVE}V246H21Z`} fill="url(#wave)" />
              <path d={WAVE} fill="none" stroke="#5566ea" strokeWidth="4" />
            </svg>
            <span className="absolute -left-1 top-1.5 h-[19px] w-2 rounded border border-[#8a8a90] bg-[#232325]" />
            <span className="absolute -right-1 top-1.5 h-[19px] w-2 rounded border border-[#a0a0a6] bg-[#232325]" />
            <span className="absolute bottom-0 size-[7px] -translate-x-1/2 rounded-full bg-[#cfd0dc]" style={{ left: `${PLAYHEAD * 100}%` }} />
          </div>
          <div className="relative mr-[3px] flex min-h-0 flex-1 flex-col">
            <div className="h-[21px] shrink-0 overflow-hidden bg-[#27272a] pl-3">
              <ol className="-mr-[17px] grid h-full grid-cols-12 items-center text-[11px] text-[#a6a6a8]">
                {TICKS.map((t, n) => (
                  <li key={n} className="flex items-center gap-[5px]">
                    <span className="h-[14px] w-px bg-[#a6a6a8]" />
                    {t}
                  </li>
                ))}
              </ol>
            </div>
            <svg viewBox="21 315 3387 528" preserveAspectRatio="none" className="min-h-0 w-full flex-1" role="img" aria-label="Events over time">
              <path d={bars(TRAFFIC, 392)} fill="#377d22" />
              <path d={bars(TRAFFIC, 590, 5)} fill="#49688f" />
              <path d={bars(AUTH_PEAKS, 590)} fill="#5d80ab" />
              <path d={bars(TRANSFERS, 690)} fill="#415a80" />
              <path d={bars(SCANS, 790)} fill="#435a80" />
            </svg>
            <div className="absolute top-[3px] bottom-0 flex -translate-x-1/2 flex-col items-center" style={{ left: `${PLAYHEAD * 100}%` }}>
              <svg viewBox="0 0 12 14" className="h-[14px] w-3" aria-hidden="true">
                <path d="M1.500 1h9v7L6 13 1.500 8Z" fill="#27272a" stroke="#c4c4c8" strokeWidth="1.300" />
              </svg>
              <span className="w-0.5 flex-1 bg-[#c4c4c8]" />
            </div>
          </div>
        </div>
      </div>
    </section>
  );
}

export default function App() {
  return (
    <main className="grid h-screen grid-rows-[minmax(0,1fr)_315px] gap-[5px] bg-[#151517] font-[Inter,sans-serif]">
      <div className="grid min-h-0 grid-cols-[minmax(0,1fr)_442px] gap-[5px]">
        <NetworkPanel />
        <InspectorPanel />
      </div>
      <TimelinePanel />
    </main>
  );
}
